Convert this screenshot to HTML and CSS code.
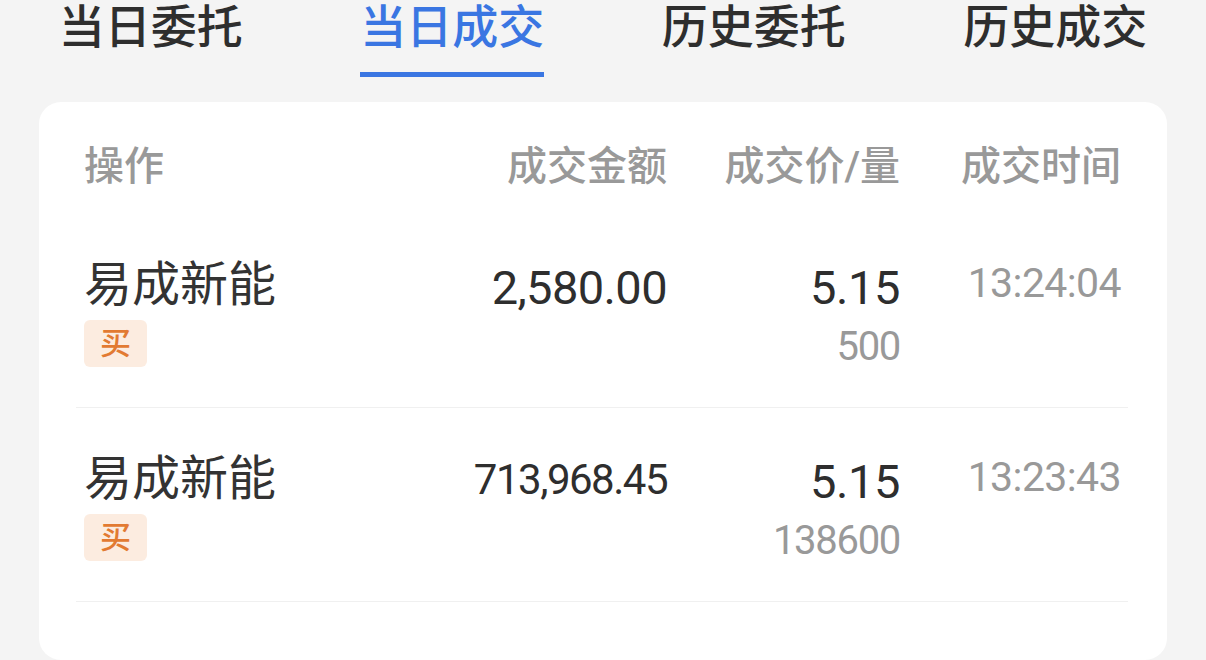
FILE: index.html
```html
<!DOCTYPE html>
<html lang="zh-CN">
<head>
    <meta charset="UTF-8">
    <meta name="viewport" content="width=device-width, initial-scale=1.0">
    <title>当日成交</title>
    <link rel="stylesheet" href="styles.css">
</head>
<body>
    <nav class="tabs">
        <div class="tab"><span class="tab-label">当日委托</span></div>
        <div class="tab active"><span class="tab-label">当日成交</span></div>
        <div class="tab"><span class="tab-label">历史委托</span></div>
        <div class="tab"><span class="tab-label">历史成交</span></div>
    </nav>

    <div class="card">
        <div class="head-row">
            <div class="col-name">操作</div>
            <div class="col-num">成交金额</div>
            <div class="col-num">成交价/量</div>
            <div class="col-num">成交时间</div>
        </div>

        <div class="deal-row">
            <div class="col-name">
                <div class="stock">易成新能</div>
                <span class="badge buy">买</span>
            </div>
            <div class="col-num amount">2,580.00</div>
            <div class="col-num">
                <div class="price">5.15</div>
                <div class="qty">500</div>
            </div>
            <div class="col-num time">13:24:04</div>
        </div>

        <div class="deal-row">
            <div class="col-name">
                <div class="stock">易成新能</div>
                <span class="badge buy">买</span>
            </div>
            <div class="col-num amount long">713,968.45</div>
            <div class="col-num">
                <div class="price">5.15</div>
                <div class="qty">138600</div>
            </div>
            <div class="col-num time">13:23:43</div>
        </div>
    </div>
</body>
</html>
```

FILE: styles.css
```css
body {
    margin: 0;
    background-color: #f4f4f4;
    color: #333;
    font-family: Roboto, "Noto Sans CJK SC", sans-serif;
}

.tabs {
    display: flex;
}

.tab {
    flex: 1;
    text-align: center;
}

.tab-label {
    display: inline-block;
    font-size: 46px;
    font-weight: 500;
    line-height: 54px;
    padding-bottom: 18px;
    border-bottom: 5px solid transparent;
    color: #2e2e2e;
}

.tab.active .tab-label {
    color: #3a76e2;
    border-bottom-color: #3a76e2;
}

.card {
    margin: 25px 39px 0 39px;
    padding: 40px 39px 58px 37px;
    background-color: white;
    border-radius: 22px;
}

.head-row,
.deal-row {
    display: grid;
    grid-template-columns: 1fr 300px 233px 221px;
}

.head-row {
    padding: 0 7px 22px 8px;
    font-size: 40px;
    font-weight: 500;
    line-height: 50px;
    color: #999;
}

.deal-row {
    padding: 43px 7px 40px 8px;
    border-bottom: 1px solid #f0f0f0;
}

.col-name {
    display: flex;
    flex-direction: column;
    align-items: flex-start;
}

.col-num {
    text-align: right;
}

.stock {
    font-size: 48px;
    line-height: 56px;
    color: #333;
}

.badge {
    margin-top: 7px;
    width: 63px;
    height: 47px;
    line-height: 47px;
    text-align: center;
    font-size: 31px;
    font-weight: 500;
    border-radius: 6px;
}

.badge.buy {
    background-color: #fcece0;
    color: #e27a32;
}

.amount {
    font-size: 47px;
    letter-spacing: -0.6px;
    line-height: 62px;
    color: #2e2e2e;
}

.amount.long {
    font-size: 42px;
    letter-spacing: -1.5px;
    line-height: 58px;
}

.price {
    font-size: 47px;
    letter-spacing: -0.4px;
    line-height: 62px;
    color: #2e2e2e;
}

.qty {
    margin-top: 8px;
    font-size: 40px;
    letter-spacing: -1.3px;
    line-height: 40px;
    color: #999;
}

.time {
    font-size: 41px;
    letter-spacing: -0.6px;
    line-height: 52px;
    color: #999;
}
```
